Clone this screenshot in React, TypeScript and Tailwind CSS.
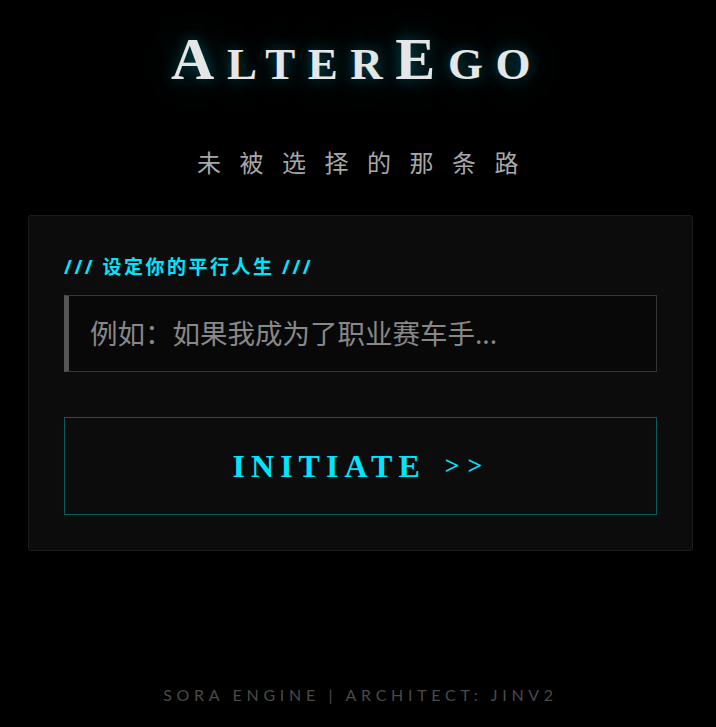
import React from 'react';

const serif = "font-['Liberation_Serif','DejaVu_Serif',serif]";
const cjk = "font-['Noto_Sans','Noto_Sans_CJK_SC',sans-serif]";

const App = () => {
  return (
    <div className="min-h-screen bg-black flex flex-col">
      {/* title */}
      <div className="pt-[29px] flex justify-center">
        <h1
          className={`${serif} font-bold text-[60px] leading-none uppercase tracking-[12.5px] pr-[2px] text-[#e6e6e6] [text-shadow:0_0_14px_rgba(0,200,220,0.35),0_0_36px_rgba(0,150,170,0.35)]`}
        >
          A<span className="text-[45px]">lter</span>E<span className="text-[45px]">go</span>
        </h1>
      </div>

      <p className={`${cjk} mt-[62px] text-center text-[24px] leading-none tracking-[18.5px] pl-[18px] text-[#a8a8a8]`}>
        未被选择的那条路
      </p>

      {/* card */}
      <div className="mt-[40px] ml-[28px] mr-[23px] rounded-[3px] border border-[#1c1c1c] bg-[#0c0c0c] px-[35px] pt-[42px] pb-[35px]">
        <div className={`${cjk} font-bold text-[19px] leading-none tracking-[2.5px] text-[#00e5ff]`}>
          /// 设定你的平行人生 ///
        </div>

        <input
          type="text"
          placeholder="例如：如果我成为了职业赛车手..."
          className={`${cjk} mt-[18px] block w-full h-[77px] bg-[#080808] border border-[#353535] border-l-[5px] border-l-[#555555] pl-[21px] pr-4 text-[27.5px] text-[#cccccc] placeholder:text-[#888888] outline-none`}
        />

        <button
          className={`${serif} mt-[45px] w-full h-[98px] flex items-center justify-center border border-[#0b5a60] bg-[#0c0c0c] text-[#00e5ff] font-bold text-[32px] leading-none tracking-[6px] pl-[2px]`}
        >
          INITIATE <span className="ml-[19px] text-[26px] tracking-[8px]">&gt;&gt;</span>
        </button>
      </div>

      {/* footer */}
      <footer className="mt-auto pb-[20px] text-center">
        <span className="font-['Lato','Open_Sans',sans-serif] text-[16px] leading-none tracking-[4.7px] pl-[5px] text-[#4a4a4a]">
          SORA ENGINE | ARCHITECT: JINV2
        </span>
      </footer>
    </div>
  );
};

export default App;
